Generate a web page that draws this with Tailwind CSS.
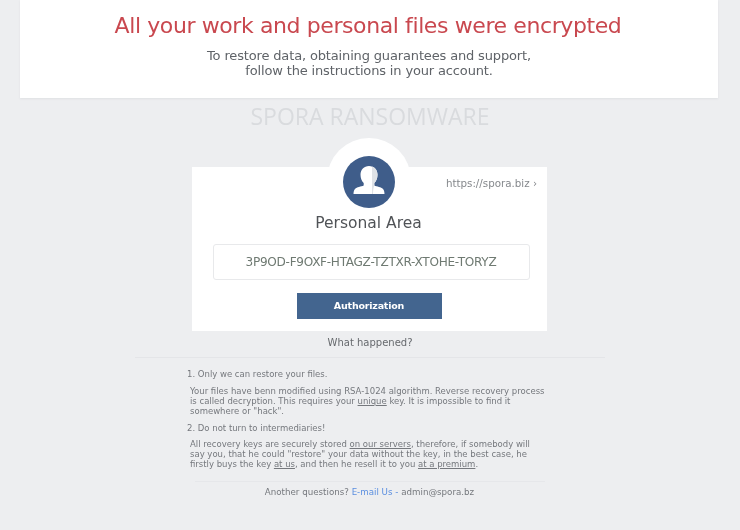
<!DOCTYPE html>
<html lang="en">
<head>
  <meta charset="UTF-8">
  <title>Spora</title>
  <script src="https://cdn.jsdelivr.net/npm/@tailwindcss/browser@4"></script>
</head>
<body class="bg-[#edeef0]">
  <div class="w-[740px] h-[530px] overflow-hidden bg-[#edeef0] font-['DejaVu_Sans',sans-serif] blur-[0.7px]">
    <!-- banner -->
    <header class="ml-[20px] w-[698px] h-[98px] bg-white shadow-[0_1px_2px_#dfe0e3] flex flex-col items-center pt-[11px]">
      <h1 class="text-[22px] leading-[30px] text-[#c9484f] tracking-[-0.4px] -ml-[2px]">All your work and personal files were encrypted</h1>
      <p class="mt-[8px] text-[13px] leading-[14.500px] text-[#5f6368] text-center tracking-[-0.15px]">To restore data, obtaining guarantees and support,<br>follow the instructions in your account.</p>
    </header>

    <div class="mt-[4px] h-[28px] text-center text-[23px] leading-[28px] text-[#d9dbde] font-['Open_Sans',sans-serif]">SPORA RANSOMWARE</div>

    <!-- login card -->
    <main class="relative ml-[192px] mt-[37px] w-[355px] h-[164px] bg-white flex flex-col items-center">
      <div class="absolute -top-[29px] left-[135px] w-[84px] h-[84px] rounded-full bg-white"></div>
      <div class="relative -mt-[11px] -ml-[2px] w-[52px] h-[52px] rounded-full bg-[#3f5d8a] overflow-hidden">
        <svg viewBox="0 0 52 52" class="w-[52px] h-[52px]">
          <path fill="#fff" d="M26 10c-5 0-8.500 3.500-8.500 8.800 0 3.600 1.300 6.300 3.200 8.200v2.400c-2.600 1.100-7 1.700-8.500 3.400-1.200 1.300-1.700 3.200-1.700 5.200h31c0-2-.5-3.900-1.700-5.200-1.500-1.700-5.900-2.300-8.500-3.400V27c1.900-1.900 3.200-4.600 3.200-8.200C34.500 13.500 31 10 26 10z"/>
          <path fill="#dfe2e6" d="M29 10.500c3.300 1 5.500 4 5.500 8.300 0 3.600-1.300 6.300-3.200 8.200v2.400c-.8 2-1.300 5.600-1.300 8.600h-1z"/>
        </svg>
      </div>
      <a class="absolute right-[10px] top-[9px] text-[10.300px] leading-[14px] text-[#85888c]">https://spora.biz ›</a>
      <h2 class="relative mt-[4px] -ml-[2px] text-[15.500px] leading-[22px] text-[#505357]">Personal Area</h2>
      <div class="mt-[10px] ml-[3px] w-[317px] h-[36px] rounded-[3px] border border-[#e8e9eb] flex items-center justify-center text-[12.100px] tracking-[-0.3px] text-[#6f7a72]">3P9OD-F9OXF-HTAGZ-TZTXR-XTOHE-TORYZ</div>
      <button class="mt-[13px] -ml-[1px] w-[145px] h-[26px] bg-[#43658f] text-white text-[9.500px] font-bold tracking-[-0.2px]">Authorization</button>
    </main>

    <div class="mt-[5px] text-center text-[10px] leading-[14px] text-[#66696d]">What happened?</div>
    <hr class="mx-[135px] mt-[7px] border-[#e4e5e8]">

    <!-- notes -->
    <section class="ml-[187px] w-[370px] mt-[11px] text-[8.500px] leading-[10px] text-[#75787d]">
      <p>1. Only we can restore your files.</p>
      <p class="mt-[7px] ml-[3px] w-[360px]">Your files have benn modified using RSA-1024 algorithm. Reverse recovery process is called decryption. This requires your <u>unique</u> key. It is impossible to find it somewhere or "hack".</p>
      <p class="mt-[7px]">2. Do not turn to intermediaries!</p>
      <p class="mt-[6px] ml-[3px] w-[352px]">All recovery keys are securely stored <u>on our servers</u>, therefore, if somebody will say you, that he could "restore" your data without the key, in the best case, he firstly buys the key <u>at us</u>, and then he resell it to you <u>at a premium</u>.</p>
    </section>
    <hr class="mx-[195px] mt-[12px] border-[#e6e7ea]">
    <footer class="mt-[3px] -ml-[1px] text-center text-[8.700px] leading-[14px] text-[#75787d]">Another questions? <a class="text-[#5b8fe0]">E-mail Us -</a> admin@spora.bz</footer>
  </div>
</body>
</html>
